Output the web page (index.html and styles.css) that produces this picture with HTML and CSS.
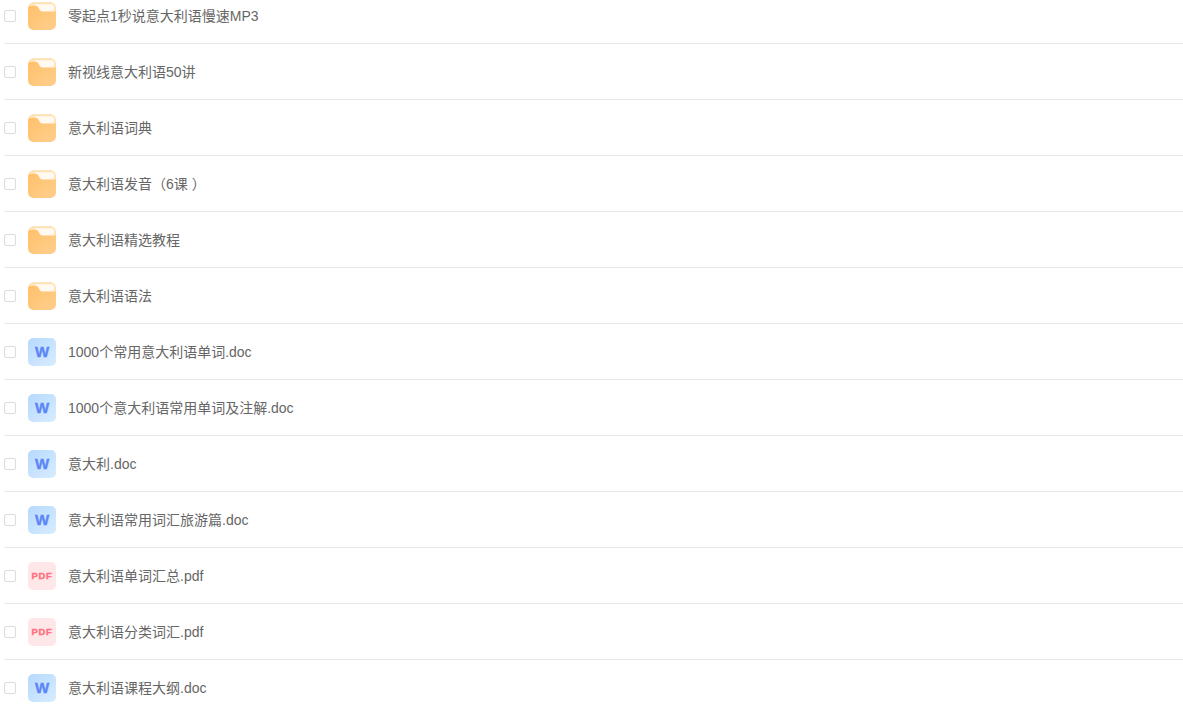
FILE: index.html
```html
<!DOCTYPE html>
<html lang="zh-CN">

<head>
    <meta charset="UTF-8">
    <title>文件列表</title>
    <link rel="stylesheet" href="styles.css">
</head>

<body>
    <svg class="defs" width="0" height="0">
        <defs>
            <linearGradient id="folderFront" x1="0" y1="0" x2="1" y2="1">
                <stop offset="0" stop-color="#ffc06a" />
                <stop offset="1" stop-color="#ffcf8e" />
            </linearGradient>
            <symbol id="folder" viewBox="0 0 28 28">
                <rect x="0" y="0" width="28" height="28" rx="5.500" fill="#ffe3b8" />
                <path d="M7 2.200h16.500c1.500 0 2.500 1 2.500 2.500v5H12z" fill="#fff9f0" />
                <path d="M0 6.500c0-1.500 1-2.500 2.500-2.500H8c1 0 1.600 .5 2.100 1.300l2.300 3.400c.4 .6 .9 .8 1.600 .8H28V22.500c0 3.300-2.200 5.500-5.500 5.500H5.500C2.200 28 0 25.800 0 22.500z" fill="url(#folderFront)" />
            </symbol>
        </defs>
    </svg>

    <ul class="file-list">
        <li class="file-row"><span class="check"></span><svg class="icon"><use href="#folder" /></svg><span class="name">零起点1秒说意大利语慢速MP3</span></li>
        <li class="file-row"><span class="check"></span><svg class="icon"><use href="#folder" /></svg><span class="name">新视线意大利语50讲</span></li>
        <li class="file-row"><span class="check"></span><svg class="icon"><use href="#folder" /></svg><span class="name">意大利语词典</span></li>
        <li class="file-row"><span class="check"></span><svg class="icon"><use href="#folder" /></svg><span class="name">意大利语发音（6课 ）</span></li>
        <li class="file-row"><span class="check"></span><svg class="icon"><use href="#folder" /></svg><span class="name">意大利语精选教程</span></li>
        <li class="file-row"><span class="check"></span><svg class="icon"><use href="#folder" /></svg><span class="name">意大利语语法</span></li>
        <li class="file-row"><span class="check"></span><span class="icon doc">W</span><span class="name">1000个常用意大利语单词.doc</span></li>
        <li class="file-row"><span class="check"></span><span class="icon doc">W</span><span class="name">1000个意大利语常用单词及注解.doc</span></li>
        <li class="file-row"><span class="check"></span><span class="icon doc">W</span><span class="name">意大利.doc</span></li>
        <li class="file-row"><span class="check"></span><span class="icon doc">W</span><span class="name">意大利语常用词汇旅游篇.doc</span></li>
        <li class="file-row"><span class="check"></span><span class="icon pdf">PDF</span><span class="name">意大利语单词汇总.pdf</span></li>
        <li class="file-row"><span class="check"></span><span class="icon pdf">PDF</span><span class="name">意大利语分类词汇.pdf</span></li>
        <li class="file-row"><span class="check"></span><span class="icon doc">W</span><span class="name">意大利语课程大纲.doc</span></li>
    </ul>
</body>

</html>
```

FILE: styles.css
```css
* {
    margin: 0;
    padding: 0;
    box-sizing: border-box;
}

html,
body {
    height: 100%;
    overflow: hidden;
    background: #fff;
}

body {
    font-family: "Liberation Sans", "Noto Sans CJK SC", sans-serif;
    font-size: 14px;
    color: #666;
}

.defs {
    display: block;
    height: 0;
}

.file-list {
    list-style: none;
    margin: -12px 0 0 4px;
}

.file-row {
    display: flex;
    align-items: center;
    height: 56px;
    border-bottom: 1px solid #e8e8e8;
}

.check {
    width: 12px;
    height: 12px;
    border: 1px solid #dcdcdc;
    border-radius: 2px;
    background: #fff;
    flex-shrink: 0;
}

.icon {
    width: 28px;
    height: 28px;
    margin: 0 12px;
    border-radius: 5px;
    flex-shrink: 0;
    display: flex;
    align-items: center;
    justify-content: center;
    font-family: "Liberation Sans", sans-serif;
    font-weight: bold;
}

.doc {
    background: linear-gradient(135deg, #b6d9ff, #d9ecff);
    color: #5b86f5;
    font-size: 15px;
    -webkit-text-stroke: 0.4px #5b86f5;
}

.pdf {
    background: #ffe6e8;
    color: #ff6f7c;
    font-size: 9.5px;
    letter-spacing: 0.7px;
    -webkit-text-stroke: 0.3px #ff6f7c;
}

.name {
    white-space: nowrap;
    line-height: 20px;
}
```
